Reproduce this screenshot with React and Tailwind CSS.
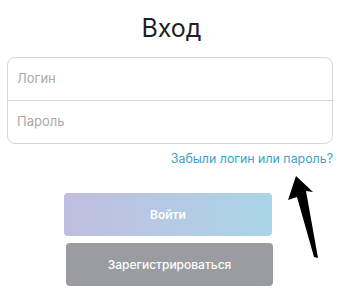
export default function App() {
  return (
    <div className="relative w-[343px] h-[291px] bg-white overflow-hidden" style={{ fontFamily: 'Inter, "Open Sans", sans-serif' }}>
      <h1 className="pt-[10px] h-[57px] text-center text-[25px] leading-[36px] font-normal text-[#1f1f1f]">Вход</h1>

      <div className="mx-[7px] w-[326px] border border-[#d6d6d6] rounded-[8px] flex flex-col">
        <div className="h-[43px] flex items-center px-[9px] border-b border-[#d6d6d6] text-[13px] text-[#a9a9a9]">Логин</div>
        <div className="h-[42px] flex items-center px-[9px] text-[13px] text-[#a9a9a9]">Пароль</div>
      </div>

      <div className="mt-[7px] pr-[10px] text-right text-[12.4px] leading-[16px] text-[#3d9fc6]">Забыли логин или пароль?</div>

      <button className="mt-[26px] ml-[64px] w-[208px] h-[43px] rounded-[4px] bg-gradient-to-r from-[#c0bedf] to-[#a8d5e7] text-white text-[12px] font-semibold flex items-center justify-center">
        Войти
      </button>
      <button className="mt-[7px] ml-[66px] w-[207px] h-[43px] rounded-[4px] bg-[#9a9ca1] text-white text-[12px] font-medium flex items-center justify-center">
        Зарегистрироваться
      </button>

      <svg className="absolute left-0 top-0" width="343" height="291" viewBox="0 0 343 291">
        <polygon points="296,176 313,192 306,191 318,258 314,257 297,197 288,200" fill="#000" />
      </svg>
    </div>
  );
}
